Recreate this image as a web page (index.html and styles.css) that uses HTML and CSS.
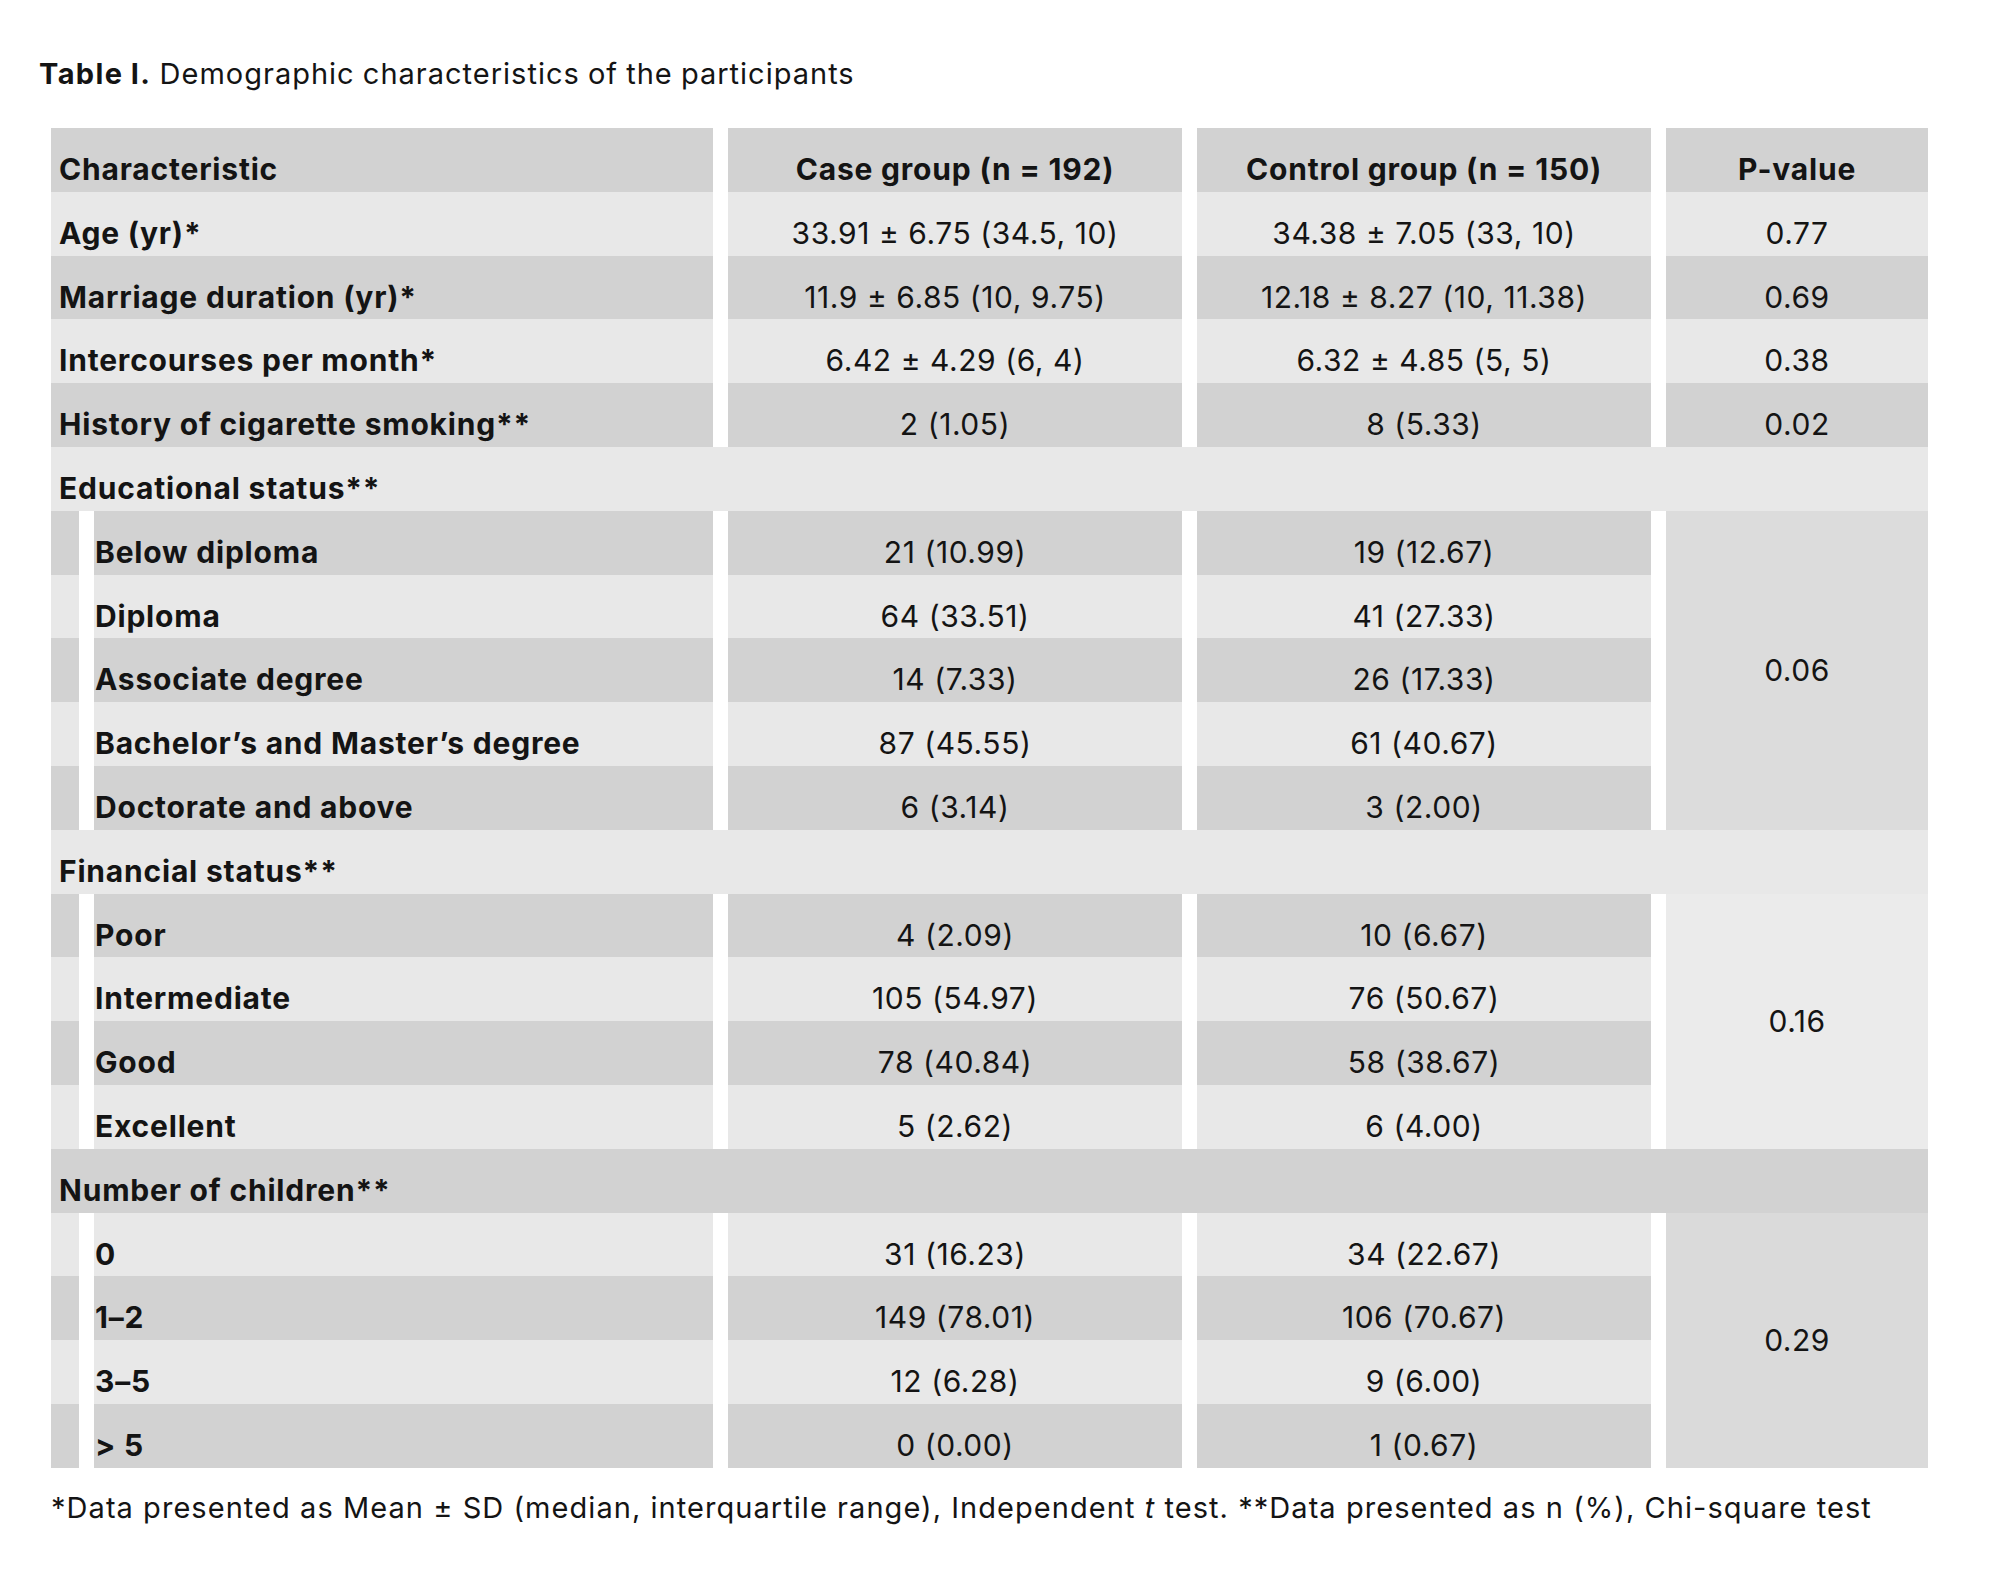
FILE: index.html
```html
<!DOCTYPE html>
<html lang="en">
<head>
<meta charset="utf-8">
<title>Table I. Demographic characteristics of the participants</title>
<link rel="stylesheet" href="styles.css">
</head>
<body>
<div class="page">
  <p class="caption"><b>Table I.</b> Demographic characteristics of the participants</p>
  <table class="tbl">
    <colgroup>
      <col class="c-ind"><col class="c-lab"><col class="c-case"><col class="c-ctrl"><col class="c-p">
    </colgroup>
    <thead>
      <tr class="dk">
        <th class="lab" colspan="2">Characteristic</th>
        <th class="num">Case group (n = 192)</th>
        <th class="num">Control group (n = 150)</th>
        <th class="num">P-value</th>
      </tr>
    </thead>
    <tbody>
      <tr class="lt">
        <td class="lab" colspan="2">Age (yr)*</td>
        <td class="num">33.91 ± 6.75 (34.5, 10)</td>
        <td class="num">34.38 ± 7.05 (33, 10)</td>
        <td class="num">0.77</td>
      </tr>
      <tr class="dk">
        <td class="lab" colspan="2">Marriage duration (yr)*</td>
        <td class="num">11.9 ± 6.85 (10, 9.75)</td>
        <td class="num">12.18 ± 8.27 (10, 11.38)</td>
        <td class="num">0.69</td>
      </tr>
      <tr class="lt">
        <td class="lab" colspan="2">Intercourses per month*</td>
        <td class="num">6.42 ± 4.29 (6, 4)</td>
        <td class="num">6.32 ± 4.85 (5, 5)</td>
        <td class="num">0.38</td>
      </tr>
      <tr class="dk">
        <td class="lab" colspan="2">History of cigarette smoking**</td>
        <td class="num">2 (1.05)</td>
        <td class="num">8 (5.33)</td>
        <td class="num">0.02</td>
      </tr>

      <tr class="lt">
        <td class="lab sec" colspan="5">Educational status**</td>
      </tr>
      <tr class="dk">
        <td class="ind"></td>
        <td class="sub">Below diploma</td>
        <td class="num">21 (10.99)</td>
        <td class="num">19 (12.67)</td>
        <td class="pm pm-a" rowspan="5">0.06</td>
      </tr>
      <tr class="lt">
        <td class="ind"></td>
        <td class="sub">Diploma</td>
        <td class="num">64 (33.51)</td>
        <td class="num">41 (27.33)</td>
      </tr>
      <tr class="dk">
        <td class="ind"></td>
        <td class="sub">Associate degree</td>
        <td class="num">14 (7.33)</td>
        <td class="num">26 (17.33)</td>
      </tr>
      <tr class="lt">
        <td class="ind"></td>
        <td class="sub">Bachelor’s and Master’s degree</td>
        <td class="num">87 (45.55)</td>
        <td class="num">61 (40.67)</td>
      </tr>
      <tr class="dk">
        <td class="ind"></td>
        <td class="sub">Doctorate and above</td>
        <td class="num">6 (3.14)</td>
        <td class="num">3 (2.00)</td>
      </tr>

      <tr class="lt">
        <td class="lab sec" colspan="5">Financial status**</td>
      </tr>
      <tr class="dk">
        <td class="ind"></td>
        <td class="sub">Poor</td>
        <td class="num">4 (2.09)</td>
        <td class="num">10 (6.67)</td>
        <td class="pm pm-b" rowspan="4">0.16</td>
      </tr>
      <tr class="lt">
        <td class="ind"></td>
        <td class="sub">Intermediate</td>
        <td class="num">105 (54.97)</td>
        <td class="num">76 (50.67)</td>
      </tr>
      <tr class="dk">
        <td class="ind"></td>
        <td class="sub">Good</td>
        <td class="num">78 (40.84)</td>
        <td class="num">58 (38.67)</td>
      </tr>
      <tr class="lt">
        <td class="ind"></td>
        <td class="sub">Excellent</td>
        <td class="num">5 (2.62)</td>
        <td class="num">6 (4.00)</td>
      </tr>

      <tr class="dk">
        <td class="lab sec" colspan="5">Number of children**</td>
      </tr>
      <tr class="lt">
        <td class="ind"></td>
        <td class="sub">0</td>
        <td class="num">31 (16.23)</td>
        <td class="num">34 (22.67)</td>
        <td class="pm pm-c" rowspan="4">0.29</td>
      </tr>
      <tr class="dk">
        <td class="ind"></td>
        <td class="sub">1–2</td>
        <td class="num">149 (78.01)</td>
        <td class="num">106 (70.67)</td>
      </tr>
      <tr class="lt">
        <td class="ind"></td>
        <td class="sub">3–5</td>
        <td class="num">12 (6.28)</td>
        <td class="num">9 (6.00)</td>
      </tr>
      <tr class="dk">
        <td class="ind"></td>
        <td class="sub">&gt; 5</td>
        <td class="num">0 (0.00)</td>
        <td class="num">1 (0.67)</td>
      </tr>
    </tbody>
  </table>
  <p class="foot">*Data presented as Mean ± SD (median, interquartile range), Independent <i>t</i> test. **Data presented as n (%), Chi-square test</p>
</div>
</body>
</html>
```
FILE: styles.css
```css
html, body {
  margin: 0;
  padding: 0;
  background: #ffffff;
}

body {
  font-family: Inter, Lato, "Liberation Sans", sans-serif;
  color: #141414;
}

.page {
  padding: 57px 0 0 0;
}

.caption {
  margin: 0 0 37px 39px;
  font-size: 29px;
  line-height: 34px;
  font-weight: 400;
  letter-spacing: 1px;
  word-spacing: -1px;
}

.caption b {
  font-weight: 700;
  letter-spacing: 1.4px;
}

.tbl {
  margin-left: 51px;
  width: 1877px;
  border-collapse: separate;
  border-spacing: 0;
  table-layout: fixed;
  font-size: 30px;
  line-height: 36px;
}

.c-ind { width: 28px; }
.c-lab { width: 634px; }
.c-case { width: 469px; }
.c-ctrl { width: 469px; }
.c-p { width: 277px; }

.tbl tr {
  height: 63.8px;
}

.tbl th,
.tbl td {
  box-sizing: border-box;
  height: 63.8px;
  padding: 23px 0 0 0;
  vertical-align: top;
  white-space: nowrap;
}

.tbl th {
  font-weight: 700;
}

.dk > th,
.dk > td {
  background: #d2d2d2;
}

.lt > th,
.lt > td {
  background: #e8e8e8;
}

.lab {
  text-align: left;
  font-weight: 700;
  letter-spacing: 0.8px;
  padding-left: 8px !important;
}

.sub {
  text-align: left;
  font-weight: 700;
  letter-spacing: 0.8px;
  padding-left: 1px !important;
  border-left: 15px solid #ffffff;
}

.num {
  text-align: center;
  font-weight: 400;
  letter-spacing: 0.55px;
  border-left: 15px solid #ffffff;
}

.tbl th.num {
  font-weight: 700;
  letter-spacing: 0.8px;
}

.tbl td.pm {
  text-align: center;
  vertical-align: middle;
  padding: 0;
  letter-spacing: 0.5px;
  border-left: 15px solid #ffffff;
}

.tbl td.pm-a { background: #dcdcdc; }
.tbl td.pm-b { background: #ebebeb; }
.tbl td.pm-c { background: #dadada; }

.foot {
  margin: 23px 0 0 51px;
  font-size: 29px;
  line-height: 34px;
  letter-spacing: 1.05px;
}
```
